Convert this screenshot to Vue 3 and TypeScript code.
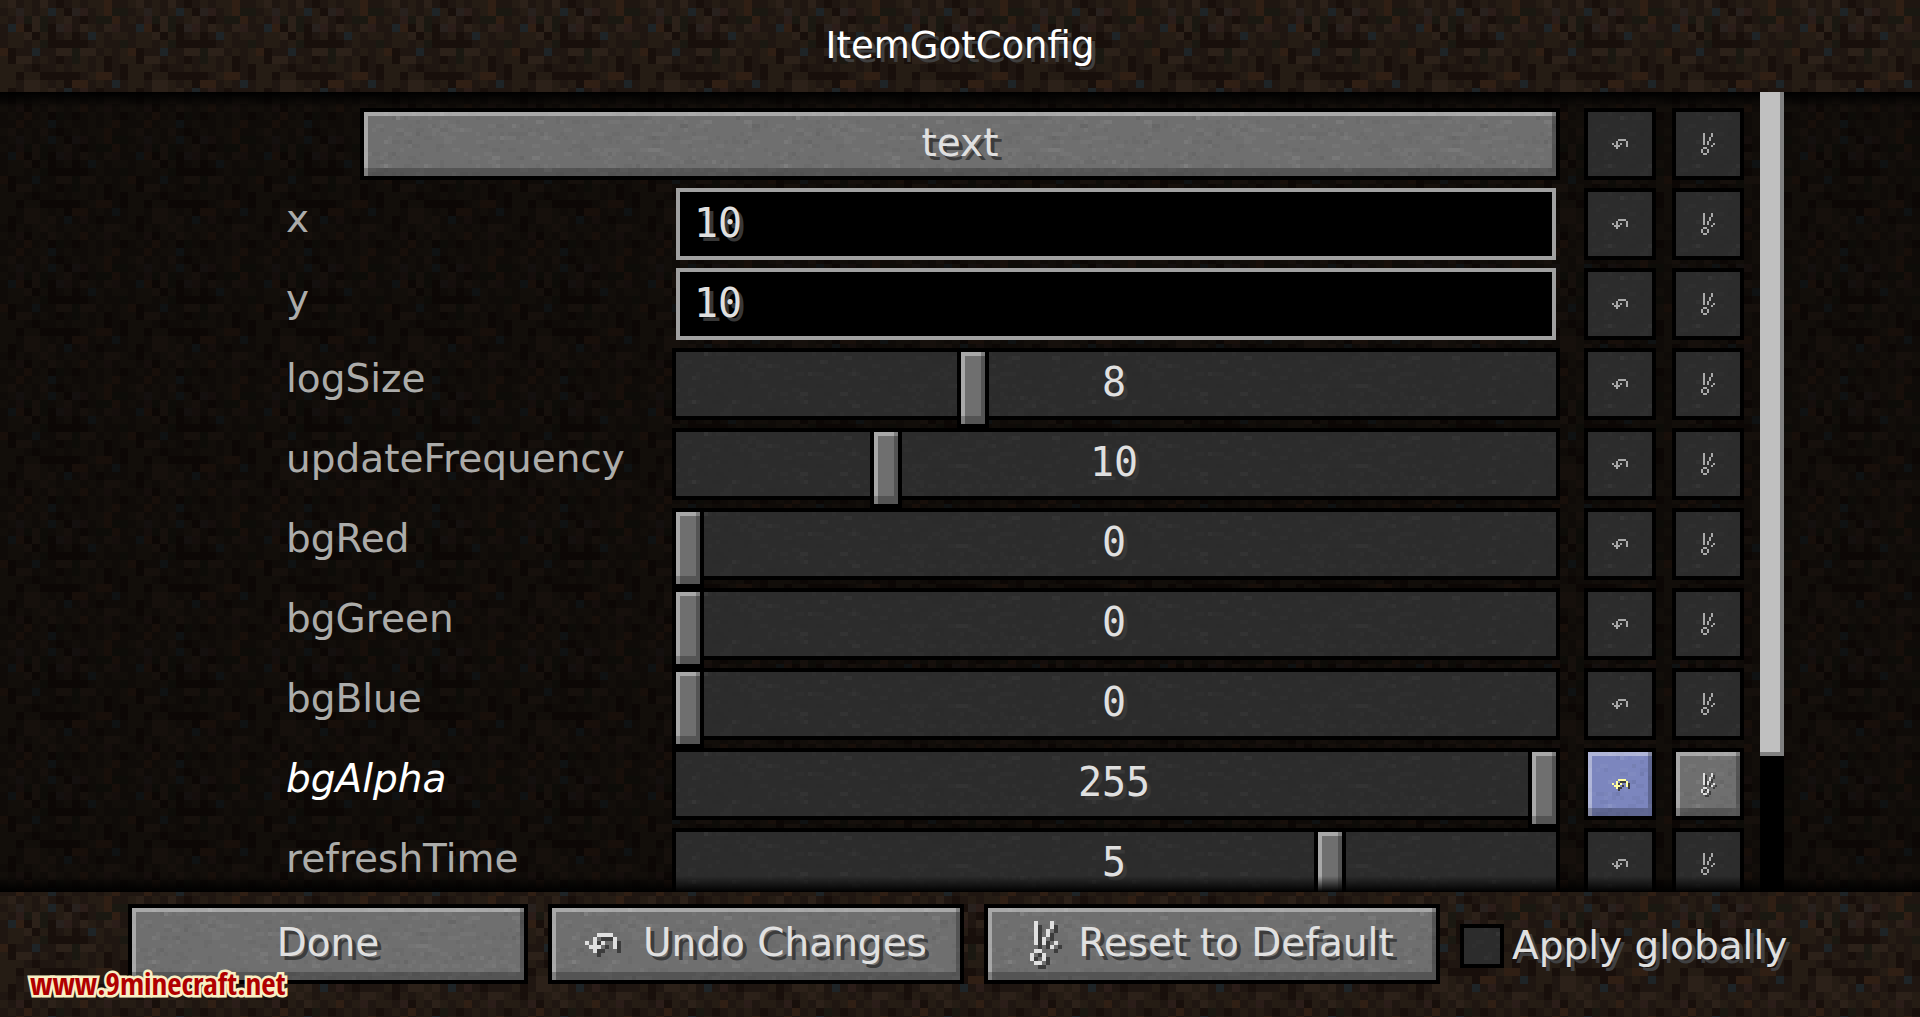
<script setup lang="ts">
import { reactive, ref } from 'vue'

interface Entry {
  name: string
  kind: 'field' | 'slider'
  value: number
  min: number
  max: number
  changed?: boolean
}

const entries = reactive<Entry[]>([
  { name: 'x', kind: 'field', value: 10, min: 0, max: 0 },
  { name: 'y', kind: 'field', value: 10, min: 0, max: 0 },
  { name: 'logSize', kind: 'slider', value: 8, min: 1, max: 22 },
  { name: 'updateFrequency', kind: 'slider', value: 10, min: 1, max: 40 },
  { name: 'bgRed', kind: 'slider', value: 0, min: 0, max: 255 },
  { name: 'bgGreen', kind: 'slider', value: 0, min: 0, max: 255 },
  { name: 'bgBlue', kind: 'slider', value: 0, min: 0, max: 255 },
  { name: 'bgAlpha', kind: 'slider', value: 255, min: 0, max: 255, changed: true },
  { name: 'refreshTime', kind: 'slider', value: 5, min: 2, max: 6 },
])

const applyGlobally = ref(false)

// Pixel icons, one character per pixel
const undoIcon = ['...####.', '..#....#', '#.#.#..#', '.###...#', '..#.....']
const resetIcon = [
  '.#...#.',
  '.#...#.',
  '.#..#..',
  '.#..#..',
  '.#.#...',
  '.#.#..#',
  '.....#.',
  '.##....',
  '#..#...',
  '#..#...',
  '.##....',
]

function pixels(rows: string[]): string {
  return rows
    .flatMap((row, y) => [...row].map((c, x) => (c === '#' ? `M${x} ${y}h1v1h-1z` : '')))
    .join('')
}
const undoPath = pixels(undoIcon)
const resetPath = pixels(resetIcon)

function tile(w: number, h: number, body: string): string {
  const svg = `<svg xmlns="http://www.w3.org/2000/svg" width="${w}" height="${h}" shape-rendering="crispEdges">${body}</svg>`
  return `url("data:image/svg+xml,${encodeURIComponent(svg)}")`
}

// Dirt block, 16 by 16 cells
const soil: Record<string, string> = {
  a: '#1f1611',
  b: '#251c14',
  c: '#2c2119',
  d: '#180f0b',
  e: '#1e2427',
  f: '#1a1811',
  g: '#28211e',
  h: '#301f14',
  i: '#2b1d19',
}
const dirtRows = [
  'bcabacadababbhaa',
  'abgbabebdgiabhff',
  'baifcfabcadaffha',
  'aehdcfdgiacbacia',
  'abbcdbdabdaebabb',
  'abbabfdddddabaaf',
  'hdaaeaaccfccabab',
  'bdccabadafbabdab',
  'bbbadaababbabdad',
  'bbdbbdddddabhhad',
  'bbaccbabdhhabaea',
  'bdaccbcaeaiadaaa',
  'adbabcbabbabaccb',
  'baidbacbabhabiab',
  'abahabdfadababad',
  'aahabbeabaababha',
]
const dirt = tile(
  128,
  128,
  dirtRows
    .flatMap((row, y) =>
      [...row].map((c, x) => `<rect x="${x * 8}" y="${y * 8}" width="8" height="8" fill="${soil[c]}"/>`),
    )
    .join(''),
)

// Fine speckle laid over buttons and slider tracks
function speckle(alpha: number): string {
  let seed = 7
  const next = () => (seed = (seed * 16807) % 2147483647) / 2147483647
  let body = ''
  for (let i = 0; i < 420; i++) {
    const x = Math.floor(next() * 98) * 4
    const y = Math.floor(next() * 18) * 4
    const w = 4 + Math.floor(next() * 2) * 4
    const fill = next() > 0.5 ? '#fff' : '#000'
    body += `<rect x="${x}" y="${y}" width="${w}" height="4" fill="${fill}" fill-opacity="${alpha}"/>`
  }
  return tile(400, 72, body)
}
const stone = speckle(0.035)
const slate = speckle(0.014)
</script>

<template>
  <div class="screen">
    <header class="bar top">
      <h1>ItemGotConfig</h1>
    </header>

    <main class="list">
      <div class="rows">
        <div class="row">
          <button type="button" class="btn category">text</button>
          <button type="button" class="btn tool" disabled aria-label="Undo text">
            <svg width="16" height="10" viewBox="0 0 8 5"><path :d="undoPath" /></svg>
          </button>
          <button type="button" class="btn tool" disabled aria-label="Reset text">
            <svg width="14" height="22" viewBox="0 0 7 11"><path :d="resetPath" /></svg>
          </button>
        </div>

        <div v-for="entry in entries" :key="entry.name" class="row">
          <label :for="entry.name" :class="{ changed: entry.changed }">{{ entry.name }}</label>
          <input
            v-if="entry.kind === 'field'"
            :id="entry.name"
            v-model="entry.value"
            class="field"
            type="text"
          />
          <div v-else class="slider">
            <input
              :id="entry.name"
              v-model.number="entry.value"
              type="range"
              :min="entry.min"
              :max="entry.max"
            />
            <output :for="entry.name">{{ entry.value }}</output>
          </div>
          <button
            type="button"
            class="btn tool"
            :class="{ hovered: entry.changed }"
            :disabled="!entry.changed"
            :aria-label="`Undo ${entry.name}`"
          >
            <svg width="16" height="10" viewBox="0 0 8 5"><path :d="undoPath" /></svg>
          </button>
          <button
            type="button"
            class="btn tool"
            :disabled="!entry.changed"
            :aria-label="`Reset ${entry.name}`"
          >
            <svg width="14" height="22" viewBox="0 0 7 11"><path :d="resetPath" /></svg>
          </button>
        </div>
      </div>
      <div class="scrollbar"><div class="grip"></div></div>
    </main>

    <footer class="bar bottom">
      <button type="button" class="btn done">Done</button>
      <button type="button" class="btn undo">
        <svg width="32" height="20" viewBox="0 0 8 5"><path :d="undoPath" /></svg>
        Undo Changes
      </button>
      <button type="button" class="btn reset">
        <svg width="28" height="44" viewBox="0 0 7 11"><path :d="resetPath" /></svg>
        Reset to Default
      </button>
      <label class="global">
        <input v-model="applyGlobally" type="checkbox" />
        Apply globally
      </label>
    </footer>

    <div class="watermark">www.9minecraft.net</div>
  </div>
</template>

<style>
body {
  margin: 0;
  background: #000;
}
</style>

<style scoped>
* {
  box-sizing: border-box;
}

.screen {
  position: relative;
  display: flex;
  flex-direction: column;
  height: 100vh;
  overflow: hidden;
  background-image: v-bind(dirt);
  font-family: 'DejaVu Sans', sans-serif;
  font-size: 39px;
  line-height: 44px;
  color: #e0e0e0;
}

.bar {
  flex: none;
  display: flex;
}

.top {
  height: 92px;
  align-items: center;
  justify-content: center;
}

h1 {
  margin: 0;
  font-size: 37px;
  font-weight: 400;
  color: #fff;
  text-shadow: 4px 4px #3f3f3f;
}

.list {
  position: relative;
  flex: 1;
  min-height: 0;
  display: flex;
  overflow: hidden;
  padding-right: 136px;
  background: rgba(0, 0, 0, 0.5);
}

/* Fades under the two bars; the scrollbar stays above them */
.list::after {
  content: '';
  position: absolute;
  inset: 0;
  pointer-events: none;
  background:
    linear-gradient(#000, transparent) top / 100% 16px no-repeat,
    linear-gradient(transparent, #000) bottom / 100% 16px no-repeat;
}

.rows {
  flex: 1;
  display: flex;
  flex-direction: column;
  gap: 8px;
  padding: 16px 16px 0 286px;
}

.row {
  flex: none;
  display: flex;
  height: 72px;
}

.row label {
  flex: none;
  align-self: center;
  width: 386px;
  padding-bottom: 10px;
  color: #acacaa;
}

.row label.changed {
  font-style: italic;
  color: #fff;
}

.btn {
  display: flex;
  align-items: center;
  justify-content: center;
  margin: 0;
  padding: 0 0 2px;
  border: 4px solid #000;
  background: #6f6f6f v-bind(stone);
  box-shadow:
    inset -4px -8px rgba(0, 0, 0, 0.24),
    inset 4px 4px rgba(255, 255, 255, 0.4);
  font: inherit;
  color: #e0e0e0;
  text-shadow: 4px 4px #3c3c3c;
}

.btn svg {
  fill: currentColor;
  shape-rendering: crispEdges;
  overflow: visible;
  filter: drop-shadow(4px 4px #3c3c3c);
}

.category {
  flex: 1;
  margin-left: 74px;
}

.tool {
  flex: none;
  width: 72px;
  margin-left: 16px;
  padding: 0;
}

.category + .tool,
.field + .tool,
.slider + .tool {
  margin-left: 24px;
}

.field + .tool {
  margin-left: 24px;
}

.tool svg {
  filter: drop-shadow(2px 2px #3c3c3c);
}

.tool:disabled {
  background: #2c2c2c v-bind(slate);
  box-shadow: none;
  color: #a9a9a9;
}

.tool:disabled svg {
  filter: none;
}

.tool.hovered {
  background-color: #7c86be;
  color: #ffffa0;
}

.field {
  flex: 1;
  min-width: 0;
  margin: 0 4px;
  padding: 0 14px 2px;
  border: 4px solid #a0a0a0;
  border-radius: 0;
  background: #000;
  font-family: 'DejaVu Sans Mono', monospace;
  font-size: 40px;
  color: #e0e0e0;
  text-shadow: 4px 4px #383838;
  outline: none;
}

.slider {
  position: relative;
  flex: 1;
  display: flex;
}

.slider input {
  appearance: none;
  width: 100%;
  height: 72px;
  margin: 0;
  border-radius: 0;
  background: #2c2c2c v-bind(slate);
  box-shadow: inset 0 0 0 4px #000;
}

.slider input::-webkit-slider-runnable-track {
  height: 72px;
}

.slider input::-webkit-slider-thumb {
  appearance: none;
  width: 32px;
  height: 80px;
  border: 4px solid #000;
  border-radius: 0;
  background: #6f6f6f;
  box-shadow:
    inset -4px -8px rgba(0, 0, 0, 0.24),
    inset 4px 4px rgba(255, 255, 255, 0.4);
}

.slider output {
  position: absolute;
  inset: 0;
  display: flex;
  align-items: center;
  justify-content: center;
  padding: 0 4px 4px 0;
  pointer-events: none;
  font-family: 'DejaVu Sans Mono', monospace;
  font-size: 40px;
  text-shadow: 4px 4px #383838;
}

.scrollbar {
  position: relative;
  z-index: 1;
  flex: none;
  width: 24px;
  background: #000;
}

.grip {
  height: 83%;
  background: #c0c0c0;
  box-shadow: inset -4px -4px #808080;
}

.bottom {
  height: 125px;
  padding: 12px 120px 0 128px;
  gap: 20px;
}

.bottom .btn {
  height: 80px;
}

.done {
  flex: 0 1 400px;
}

.undo {
  flex: 0 1 416px;
  gap: 26px;
}

.reset {
  flex: 0 1 456px;
  gap: 20px;
}

.global {
  display: flex;
  align-items: center;
  gap: 8px;
  height: 84px;
  white-space: nowrap;
  text-shadow: 4px 4px #3f4042;
}

.global input {
  appearance: none;
  width: 44px;
  height: 44px;
  margin: 0;
  border: 4px solid #000;
  background: #2c2c2c v-bind(slate);
}

.watermark {
  position: absolute;
  left: 30px;
  bottom: 12px;
  font-family: 'Liberation Sans Narrow', 'Open Sans Condensed', 'DejaVu Sans Condensed', sans-serif;
  font-size: 31px;
  font-weight: 700;
  color: #b00000;
  -webkit-text-stroke: 5px #f8efc4;
  paint-order: stroke fill;
}
</style>
